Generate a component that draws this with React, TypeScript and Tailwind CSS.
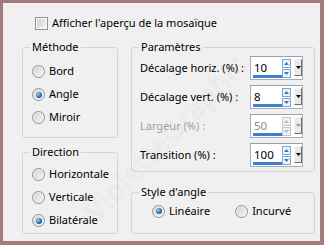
import React from 'react';

const font = { fontFamily: '"Noto Sans", "Open Sans", sans-serif' };

function Radio({ checked }: { checked?: boolean }) {
  return (
    <span className="relative flex h-[13px] w-[13px] shrink-0 items-center justify-center rounded-full border border-[#8f8f8f] bg-gradient-to-br from-[#e6e6e6] to-[#fbfbfb]">
      <span className="h-[9px] w-[9px] rounded-full bg-gradient-to-br from-[#d4d4d4] to-[#f4f4f4]" />
      {checked && (
        <span className="absolute h-[6px] w-[6px] rounded-full bg-[radial-gradient(circle_at_35%_35%,#9fd0f5,#1b64b0_60%,#0e3e78)]" />
      )}
    </span>
  );
}

function RadioRow({ label, checked, className = '' }: { label: string; checked?: boolean; className?: string }) {
  return (
    <div className={`flex items-center gap-[4px] ${className}`}>
      <Radio checked={checked} />
      <span className="whitespace-nowrap text-[11px] text-black">{label}</span>
    </div>
  );
}

function Spinner({ value, disabled }: { value: string; disabled?: boolean }) {
  const arrow = disabled ? 'border-[#c4c4c4]' : 'border-[#7aa7d8]';
  const tri = disabled ? '#b8b8b8' : '#3a77c2';
  return (
    <div className="relative flex h-[24px] w-[53px] items-center border border-[#abadb3] border-t-[#9da0a6] bg-white">
      <span className={`ml-[3px] text-[11.5px] ${disabled ? 'text-[#8a8a8a]' : 'text-black'}`}>{value}</span>
      <span className="absolute bottom-[1px] left-[2px] h-[3px] w-[30px] bg-[#3d7fcb]" />
      <div className="absolute left-[31px] top-[2px] flex flex-col gap-[1px]">
        <span className={`flex h-[9px] w-[9px] items-center justify-center border bg-[#eef3f9] ${arrow}`}>
          <svg width="5" height="3" viewBox="0 0 5 3"><path d="M0 3 L2.5 0 L5 3Z" fill={tri} /></svg>
        </span>
        <span className={`flex h-[9px] w-[9px] items-center justify-center border bg-[#eef3f9] ${arrow}`}>
          <svg width="5" height="3" viewBox="0 0 5 3"><path d="M0 0 L5 0 L2.5 3Z" fill={tri} /></svg>
        </span>
      </div>
      <span className="absolute left-[43px] top-[2px] flex h-[17px] w-[8px] items-center justify-center border border-[#f4f4f4] border-b-[#6e6e6e] border-r-[#6e6e6e] bg-[#e9e9e9]">
        <svg width="5" height="3" viewBox="0 0 5 3"><path d="M0 0 L5 0 L2.5 3Z" fill={disabled ? '#9a9a9a' : '#000'} /></svg>
      </span>
    </div>
  );
}

function ParamRow({ label, value, disabled }: { label: string; value: string; disabled?: boolean }) {
  return (
    <div className="flex h-[24px] items-center">
      <span className={`ml-[1px] w-[110px] whitespace-nowrap text-[11px] ${disabled ? 'text-[#a0a0a0]' : 'text-black'}`}>{label}</span>
      <Spinner value={value} disabled={disabled} />
    </div>
  );
}

function Group({ title, className, children }: { title: string; className: string; children: React.ReactNode }) {
  return (
    <fieldset className={`rounded-[3px] border border-[#d5d5d5] px-[7px] ${className}`}>
      <legend className="px-[2px] text-[11px] leading-[16px] text-black">{title}</legend>
      {children}
    </fieldset>
  );
}

export default function App() {
  return (
    <div className="h-[245px] w-[324px] bg-[#a57b7d] pb-[4px] pl-[3px] pr-[4px] pt-[3px]" style={font}>
      <div className="relative h-full w-full overflow-hidden bg-[#f0f0f0]">
        <div className="ml-[32px] mt-[12px] flex items-center gap-[4px]">
          <span className="flex h-[13px] w-[13px] items-center justify-center border border-[#8f8f8f] bg-white">
            <span className="h-[9px] w-[9px] bg-gradient-to-br from-[#cfcfcf] to-[#f6f6f6]" />
          </span>
          <span className="text-[11px] leading-[16px] text-black">Afficher l'aperçu de la mosaïque</span>
        </div>

        <div className="ml-[19px] mt-[8px] flex gap-[13px]">
          <div className="flex w-[96px] flex-col gap-[6px]">
            <Group title="Méthode" className="h-[99px]">
              <div className="flex flex-col pt-[5px]">
                <RadioRow label="Bord" className="ml-[2px] h-[23px]" />
                <RadioRow label="Angle" checked className="ml-[2px] h-[23px]" />
                <RadioRow label="Miroir" className="ml-[2px] h-[23px]" />
              </div>
            </Group>
            <Group title="Direction" className="h-[90px]">
              <div className="flex flex-col pt-[3px]">
                <RadioRow label="Horizontale" className="ml-[2px] h-[23px]" />
                <RadioRow label="Verticale" className="ml-[2px] h-[23px]" />
                <RadioRow label="Bilatérale" checked className="ml-[2px] h-[23px]" />
              </div>
            </Group>
          </div>

          <div className="flex w-[184px] flex-col gap-[12px]">
            <Group title="Paramètres" className="h-[133px]">
              <div className="flex flex-col gap-[5px] pt-[1px]">
                <ParamRow label="Décalage horiz. (%) :" value="10" />
                <ParamRow label="Décalage vert. (%) :" value="8" />
                <ParamRow label="Largeur (%) :" value="50" disabled />
                <ParamRow label="Transition (%) :" value="100" />
              </div>
            </Group>
            <Group title="Style d'angle" className="h-[50px]">
              <div className="flex h-[22px] items-center">
                <RadioRow label="Linéaire" checked className="ml-[13px]" />
                <RadioRow label="Incurvé" className="ml-[25px]" />
              </div>
            </Group>
          </div>
        </div>

        <span className="pointer-events-none absolute left-[162px] top-[134px] -translate-x-1/2 -translate-y-1/2 -rotate-[46deg] select-none whitespace-nowrap text-[28px] tracking-[1px] text-transparent [-webkit-text-stroke:0.6px_rgba(150,130,130,0.18)]">
          VioletteGraphic
        </span>
      </div>
    </div>
  );
}
